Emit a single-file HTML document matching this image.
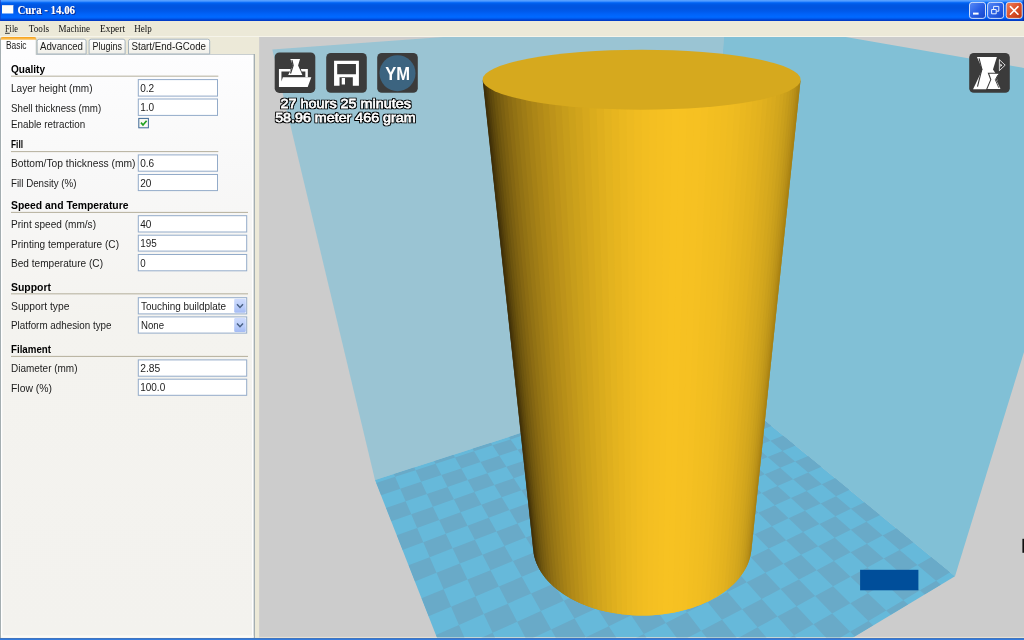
<!DOCTYPE html>
<html lang="en">
<head>
<meta charset="utf-8">
<title>Cura - 14.06</title>
<style>
html,body{margin:0;padding:0;}
body{width:1024px;height:640px;overflow:hidden;position:relative;background:#ece9d8;font-family:"Liberation Sans",sans-serif;}
.region{position:absolute;overflow:hidden;}
.layer{display:block;position:absolute;left:0;top:0;will-change:transform;}
#titlebar{left:0;top:0;width:1024px;height:21px;}
#menubar{left:0;top:21px;width:1024px;height:16px;background:#ece9d8;}
#sidebar{left:0;top:37px;width:259px;height:601px;background:#ece9d8;}
#viewport{left:259px;top:37px;width:765px;height:601px;background:#cccccc;}
#taskbar{left:0;top:637.7px;width:1024px;height:3px;background:linear-gradient(to bottom,#4f6f9f 0,#3478d8 30%,#2e80e4 100%);}
text{white-space:pre;}
</style>
</head>
<body>
<div id="titlebar" class="region">
<svg class="layer" width="1024" height="21" viewBox="0 0 1024 21">
<defs><linearGradient id="tb" x1="0" y1="0" x2="0" y2="1"><stop offset="0.000" stop-color="#5ea4ff"/><stop offset="0.057" stop-color="#4a98ff"/><stop offset="0.095" stop-color="#1a78ff"/><stop offset="0.143" stop-color="#0062f0"/><stop offset="0.238" stop-color="#0056e2"/><stop offset="0.381" stop-color="#0055e0"/><stop offset="0.524" stop-color="#0059ea"/><stop offset="0.667" stop-color="#0062f8"/><stop offset="0.786" stop-color="#0068ff"/><stop offset="0.857" stop-color="#0064fa"/><stop offset="0.905" stop-color="#0050e0"/><stop offset="0.952" stop-color="#0040d0"/><stop offset="1.000" stop-color="#0038c0"/></linearGradient><linearGradient id="bb" x1="0" y1="0" x2="1" y2="1"><stop offset="0" stop-color="#5a8cf6"/><stop offset="0.5" stop-color="#2a60e6"/><stop offset="1" stop-color="#1444c8"/></linearGradient><linearGradient id="rb" x1="0" y1="0" x2="1" y2="1"><stop offset="0" stop-color="#ee8462"/><stop offset="0.5" stop-color="#dc5028"/><stop offset="1" stop-color="#b83410"/></linearGradient><filter id="ts" x="-5%" y="-30%" width="110%" height="170%"><feOffset in="SourceAlpha" dx="0.8" dy="0.8" result="s"/><feFlood flood-color="#0a2a90"/><feComposite in2="s" operator="in" result="c"/><feMerge><feMergeNode in="c"/><feMergeNode in="SourceGraphic"/></feMerge></filter></defs>
<rect x="0" y="0" width="1024" height="21" fill="url(#tb)"/>
<rect x="0" y="0" width="1" height="21" fill="#1a3cc0" opacity="0.6"/>
<rect x="1022.7" y="0" width="1.3" height="21" fill="#0028a0" opacity="0.75"/>
<rect x="2" y="5.2" width="11.3" height="8.3" fill="#fdfdfb"/>
<rect x="2" y="5" width="11.3" height="0.8" fill="#d8dcf0"/>
<text x="17.5" y="13.8" font-size="11.8" textLength="57.5" lengthAdjust="spacingAndGlyphs" font-family='"Liberation Serif", serif' font-weight="bold" fill="#ffffff" filter="url(#ts)">Cura - 14.06</text>
<rect x="969.5" y="2.4" width="16" height="16" rx="2.6" fill="url(#bb)" stroke="#e4ecfc" stroke-width="0.9"/>
<rect x="987.6" y="2.4" width="16" height="16" rx="2.6" fill="url(#bb)" stroke="#e4ecfc" stroke-width="0.9"/>
<rect x="1006.2" y="2.4" width="16" height="16" rx="2.6" fill="url(#rb)" stroke="#e4ecfc" stroke-width="0.9"/>
<rect x="973" y="12.6" width="5.6" height="2" fill="#fff"/>
<path d="M991.6 9.5h4.6v4.3h-4.6z M993.6 9.3V6.4h5.2v4.8h-2.4" fill="none" stroke="#e8f0ff" stroke-width="1"/>
<path d="M1010.4 6.6l7.6 7.6M1018 6.6l-7.6 7.6" stroke="#fff" stroke-width="1.6" stroke-linecap="round"/>
</svg>
</div>
<div id="menubar" class="region">
<svg class="layer" width="1024" height="16" viewBox="0 21 1024 16">
<rect x="0" y="36" width="1024" height="1" fill="#f6f4ea"/>
<g font-family='"Liberation Serif", serif' fill="#111">
<text x="5" y="31.9" font-size="11" textLength="12.9" lengthAdjust="spacingAndGlyphs">File</text>
<text x="28.75" y="31.9" font-size="11" textLength="20.25" lengthAdjust="spacingAndGlyphs">Tools</text>
<text x="58.5" y="31.9" font-size="11" textLength="31.5" lengthAdjust="spacingAndGlyphs">Machine</text>
<text x="100" y="31.9" font-size="11" textLength="25" lengthAdjust="spacingAndGlyphs">Expert</text>
<text x="134.25" y="31.9" font-size="11" textLength="17.5" lengthAdjust="spacingAndGlyphs">Help</text>
</g>
<rect x="5" y="32.8" width="4.8" height="0.9" fill="#222"/>
</svg>
</div>
<div id="sidebar" class="region">
<svg class="layer" width="259" height="601" viewBox="0 37 259 601">
<defs><linearGradient id="pg" x1="0" y1="0" x2="0" y2="1"><stop offset="0" stop-color="#fdfdfe"/><stop offset="0.2" stop-color="#f8f8f8"/><stop offset="0.45" stop-color="#f4f3ef"/><stop offset="1" stop-color="#f3f2ee"/></linearGradient><linearGradient id="tg" x1="0" y1="0" x2="0" y2="1"><stop offset="0" stop-color="#ffffff"/><stop offset="1" stop-color="#f0efe8"/></linearGradient><linearGradient id="cb" x1="0" y1="0" x2="0" y2="1"><stop offset="0" stop-color="#cfdcfd"/><stop offset="0.6" stop-color="#b9ccfa"/><stop offset="1" stop-color="#a4bbf3"/></linearGradient></defs>
<rect x="0" y="54" width="255" height="584" fill="#a4aeb1"/>
<rect x="1" y="54.6" width="252.6" height="583" fill="#ffffff"/>
<rect x="2.3" y="55" width="249.7" height="580.7" fill="url(#pg)"/>
<rect x="1" y="635.7" width="252.6" height="2.2" fill="#fbfaf6"/>
<path d="M37.1 54V41.2q0 -2 2 -2H84.1q2 0 2 2V54z" fill="url(#tg)" stroke="#a4b3be" stroke-width="1"/>
<path d="M89.1 54V41.2q0 -2 2 -2H123.1q2 0 2 2V54z" fill="url(#tg)" stroke="#a4b3be" stroke-width="1"/>
<path d="M128.5 54V41.2q0 -2 2 -2H207.7q2 0 2 2V54z" fill="url(#tg)" stroke="#a4b3be" stroke-width="1"/>
<path d="M0 58V39.6q0 -2.4 2.4 -2.4H34.2q2.2 0 2.2 2.2V54.4H1.2V58z" fill="#a4aeb1"/>
<path d="M1 58V39.8q0 -1.8 1.8 -1.8H34q1.8 0 1.8 1.8V56H2.3V58z" fill="#fdfdfe"/>
<rect x="1" y="54" width="1.3" height="4" fill="#ffffff"/>
<path d="M0.6 39.4q0.2 -2.4 2.4 -2.4H34q2.2 0 2.4 2.4z" fill="#f8a622"/>
<rect x="0.9" y="38.5" width="35.2" height="0.9" fill="#fbc868"/>
<g font-family='"Liberation Sans", sans-serif' fill="#1a1a1a">
<text x="6" y="48.8" font-size="10" textLength="20.5" lengthAdjust="spacingAndGlyphs">Basic</text>
<text x="40" y="50" font-size="10" textLength="43" lengthAdjust="spacingAndGlyphs">Advanced</text>
<text x="92.5" y="50" font-size="10" textLength="29.5" lengthAdjust="spacingAndGlyphs">Plugins</text>
<text x="131.5" y="50" font-size="10" textLength="74.5" lengthAdjust="spacingAndGlyphs">Start/End-GCode</text>
</g>
<g font-family='"Liberation Sans", sans-serif'>
<text x="11" y="72.9" font-size="10.2" textLength="34" lengthAdjust="spacingAndGlyphs" font-weight="bold" fill="#000">Quality</text>
<rect x="11" y="75.7" width="207.3" height="0.9" fill="#ada792"/>
<text x="11" y="92.2" font-size="10.2" textLength="81.5" lengthAdjust="spacingAndGlyphs" fill="#1c1c1c">Layer height (mm)</text>
<rect x="138.3" y="79.6" width="79.2" height="16.5" fill="#ffffff" stroke="#93abc9" stroke-width="1"/>
<text x="140.2" y="91.7" font-size="10.2" textLength="14" lengthAdjust="spacingAndGlyphs" fill="#1c1c1c">0.2</text>
<text x="11" y="111.5" font-size="10.2" textLength="90.2" lengthAdjust="spacingAndGlyphs" fill="#1c1c1c">Shell thickness (mm)</text>
<rect x="138.3" y="99" width="79.2" height="16.4" fill="#ffffff" stroke="#93abc9" stroke-width="1"/>
<text x="140.2" y="111.1" font-size="10.2" textLength="14" lengthAdjust="spacingAndGlyphs" fill="#1c1c1c">1.0</text>
<text x="11" y="127.5" font-size="10.2" textLength="74.2" lengthAdjust="spacingAndGlyphs" fill="#1c1c1c">Enable retraction</text>
<rect x="138.8" y="118.4" width="9.6" height="9.4" fill="#f8f8f4" stroke="#3f6a97" stroke-width="1"/>
<path d="M141 122.6l2 2.4l3.6 -4.2" fill="none" stroke="#21a121" stroke-width="1.7"/>
<text x="11" y="148.4" font-size="10.2" textLength="12" lengthAdjust="spacingAndGlyphs" font-weight="bold" fill="#000">Fill</text>
<rect x="11" y="151.2" width="207.3" height="0.9" fill="#ada792"/>
<text x="11" y="167.4" font-size="10.2" textLength="124.5" lengthAdjust="spacingAndGlyphs" fill="#1c1c1c">Bottom/Top thickness (mm)</text>
<rect x="138.3" y="154.9" width="79.2" height="16.3" fill="#ffffff" stroke="#93abc9" stroke-width="1"/>
<text x="140.2" y="167" font-size="10.2" textLength="14" lengthAdjust="spacingAndGlyphs" fill="#1c1c1c">0.6</text>
<text x="11" y="187" font-size="10.2" textLength="65.5" lengthAdjust="spacingAndGlyphs" fill="#1c1c1c">Fill Density (%)</text>
<rect x="138.3" y="174.5" width="79.2" height="16.1" fill="#ffffff" stroke="#93abc9" stroke-width="1"/>
<text x="140.2" y="186.6" font-size="10.2" textLength="11.2" lengthAdjust="spacingAndGlyphs" fill="#1c1c1c">20</text>
<text x="11" y="209.1" font-size="10.2" textLength="117.5" lengthAdjust="spacingAndGlyphs" font-weight="bold" fill="#000">Speed and Temperature</text>
<rect x="11" y="211.9" width="237" height="0.9" fill="#ada792"/>
<text x="11" y="228.3" font-size="10.2" textLength="85" lengthAdjust="spacingAndGlyphs" fill="#1c1c1c">Print speed (mm/s)</text>
<rect x="138.3" y="215.7" width="108.4" height="16.3" fill="#ffffff" stroke="#93abc9" stroke-width="1"/>
<text x="140.2" y="227.8" font-size="10.2" textLength="11.2" lengthAdjust="spacingAndGlyphs" fill="#1c1c1c">40</text>
<text x="11" y="247.6" font-size="10.2" textLength="108" lengthAdjust="spacingAndGlyphs" fill="#1c1c1c">Printing temperature (C)</text>
<rect x="138.3" y="235.2" width="108.4" height="15.9" fill="#ffffff" stroke="#93abc9" stroke-width="1"/>
<text x="140.2" y="247.3" font-size="10.2" textLength="16.5" lengthAdjust="spacingAndGlyphs" fill="#1c1c1c">195</text>
<text x="11" y="267" font-size="10.2" textLength="92" lengthAdjust="spacingAndGlyphs" fill="#1c1c1c">Bed temperature (C)</text>
<rect x="138.3" y="254.5" width="108.4" height="16.3" fill="#ffffff" stroke="#93abc9" stroke-width="1"/>
<text x="140.2" y="266.6" font-size="10.2" textLength="5.4" lengthAdjust="spacingAndGlyphs" fill="#1c1c1c">0</text>
<text x="11" y="290.6" font-size="10.2" textLength="40" lengthAdjust="spacingAndGlyphs" font-weight="bold" fill="#000">Support</text>
<rect x="11" y="293.4" width="237" height="0.9" fill="#ada792"/>
<text x="11" y="310" font-size="10.2" textLength="58.5" lengthAdjust="spacingAndGlyphs" fill="#1c1c1c">Support type</text>
<rect x="138.3" y="297.7" width="108.4" height="16.2" fill="#ffffff" stroke="#93abc9" stroke-width="1"/>
<text x="141" y="309.6" font-size="10.2" textLength="85" lengthAdjust="spacingAndGlyphs" fill="#1c1c1c">Touching buildplate</text>
<rect x="234.2" y="298.8" width="11.6" height="14" rx="1.2" fill="url(#cb)"/>
<path d="M237 304.3L240 307.5L243 304.3" fill="none" stroke="#4a6184" stroke-width="1.5"/>
<text x="11" y="329.2" font-size="10.2" textLength="100.5" lengthAdjust="spacingAndGlyphs" fill="#1c1c1c">Platform adhesion type</text>
<rect x="138.3" y="316.9" width="108.4" height="16.2" fill="#ffffff" stroke="#93abc9" stroke-width="1"/>
<text x="141" y="328.8" font-size="10.2" textLength="23" lengthAdjust="spacingAndGlyphs" fill="#1c1c1c">None</text>
<rect x="234.2" y="318" width="11.6" height="14" rx="1.2" fill="url(#cb)"/>
<path d="M237 323.5L240 326.7L243 323.5" fill="none" stroke="#4a6184" stroke-width="1.5"/>
<text x="11" y="353.1" font-size="10.2" textLength="40" lengthAdjust="spacingAndGlyphs" font-weight="bold" fill="#000">Filament</text>
<rect x="11" y="355.9" width="237" height="0.9" fill="#ada792"/>
<text x="11" y="372.3" font-size="10.2" textLength="66.5" lengthAdjust="spacingAndGlyphs" fill="#1c1c1c">Diameter (mm)</text>
<rect x="138.3" y="359.9" width="108.4" height="16.3" fill="#ffffff" stroke="#93abc9" stroke-width="1"/>
<text x="140.2" y="372" font-size="10.2" textLength="20" lengthAdjust="spacingAndGlyphs" fill="#1c1c1c">2.85</text>
<text x="11" y="391.5" font-size="10.2" textLength="41" lengthAdjust="spacingAndGlyphs" fill="#1c1c1c">Flow (%)</text>
<rect x="138.3" y="379.2" width="108.4" height="16.1" fill="#ffffff" stroke="#93abc9" stroke-width="1"/>
<text x="140.2" y="391.3" font-size="10.2" textLength="25" lengthAdjust="spacingAndGlyphs" fill="#1c1c1c">100.0</text>
</g>
</svg>
</div>
<div id="viewport" class="region">
<svg class="layer" width="765" height="601" viewBox="259 37 765 601">
<defs><clipPath id="vp"><rect x="259.3" y="37" width="764.7" height="600.3"/></clipPath><clipPath id="floor"><polygon id="floorpoly" points="375,480 707,373 955,576.3 516.5,840"/></clipPath></defs>
<rect x="259" y="37" width="0.5" height="601" fill="#ece9d8"/>
<rect x="259.3" y="37" width="764.7" height="600.3" fill="#cccccc"/>
<rect x="259.3" y="636.9" width="764.7" height="1.1" fill="#e6e0d2"/>
<g clip-path="url(#vp)">
<polygon points="375,480 272.3,49.6 457,36 723.7,36 707,373" fill="#9ac4d3"/>
<polygon points="707,373 723.7,36 840,36 1030,69 1040,300 955,576.3" fill="#81c0d6"/>
<polygon points="375,480 707,373 955,576.3 516.5,840" fill="#66b9da"/>
<g clip-path="url(#floor)" fill="#69aac8">
<path d="M376.17 482.98L395.09 476.84L400.24 488.79L380.98 495.2zM385.99 507.97L405.62 501.26L411.24 514.29L391.24 521.32zM396.73 535.29L417.12 527.92L423.28 542.18L402.49 549.93zM408.52 565.28L429.73 557.14L436.5 572.83L414.86 581.4zM421.52 598.34L443.61 589.32L451.09 606.66L428.53 616.18zM435.92 634.98L458.97 624.93L467.28 644.19L443.72 654.83zM393.83 473.93L414.24 467.35L415.59 470.19L395.09 476.84zM400.24 488.79L421.11 481.84L426.87 493.99L405.62 501.26zM411.24 514.29L432.88 506.67L439.17 519.94L417.12 527.92zM423.28 542.18L445.74 533.82L452.63 548.35L429.73 557.14zM436.5 572.83L459.85 563.59L467.44 579.59L443.61 589.32zM451.09 606.66L475.41 596.41L483.79 614.1L458.97 624.93zM467.28 644.19L492.63 632.75L501.96 652.43L476.06 664.54zM415.59 470.19L435.56 463.71L441.43 475.07L421.11 481.84zM426.87 493.99L447.54 486.91L453.92 499.27L432.88 506.67zM439.17 519.94L460.59 512.18L467.56 525.69L445.74 533.82zM452.63 548.35L474.86 539.82L482.51 554.63L459.85 563.59zM467.44 579.59L490.53 570.16L498.95 586.47L475.41 596.41zM483.79 614.1L507.81 603.63L517.14 621.69L492.63 632.75zM501.96 652.43L526.97 640.73L537.35 660.84L511.81 673.23zM434.13 460.94L453.52 454.69L455.03 457.39L435.56 463.71zM441.43 475.07L461.22 468.48L467.67 480.02L447.54 486.91zM453.92 499.27L474.4 492.07L481.43 504.64L460.59 512.18zM467.56 525.69L488.77 517.79L496.45 531.53L474.86 539.82zM482.51 554.63L504.49 545.93L512.92 561.01L490.53 570.16zM498.95 586.47L521.77 576.85L531.06 593.49L507.81 603.63zM517.14 621.69L540.84 610.99L551.14 629.43L526.97 640.73zM455.03 457.39L474.01 451.24L480.51 462.05L461.22 468.48zM467.67 480.02L487.27 473.32L494.33 485.06L474.4 492.07zM481.43 504.64L501.69 497.31L509.38 510.11L488.77 517.79zM496.45 531.53L517.42 523.48L525.83 537.48L504.49 545.93zM512.92 561.01L534.64 552.14L543.89 567.52L521.77 576.85zM531.06 593.49L553.59 583.66L563.79 600.63L540.84 610.99zM551.14 629.43L574.52 618.5L585.83 637.32L562.01 648.88zM472.42 448.6L490.86 442.66L492.52 445.23L474.01 451.24zM480.51 462.05L499.31 455.79L506.37 466.78L487.27 473.32zM494.33 485.06L513.74 478.23L521.42 490.17L501.69 497.31zM509.38 510.11L529.43 502.64L537.81 515.66L517.42 523.48zM525.83 537.48L546.56 529.27L555.73 543.53L534.64 552.14zM543.89 567.52L565.34 558.47L575.42 574.14L553.59 583.66zM563.79 600.63L586 590.61L597.14 607.92L574.52 618.5zM585.83 637.32L608.86 626.15L621.23 645.38L597.77 657.19zM492.52 445.23L510.57 439.38L517.64 449.68L499.31 455.79zM506.37 466.78L524.99 460.41L532.64 471.58L513.74 478.23zM521.42 490.17L540.62 483.22L548.94 495.37L529.43 502.64zM537.81 515.66L557.63 508.05L566.71 521.3L546.56 529.27zM555.73 543.53L576.21 535.17L586.16 549.69L565.34 558.47zM575.42 574.14L596.59 564.91L607.53 580.89L586 590.61zM597.14 607.92L619.04 597.68L631.14 615.35L608.86 626.15zM621.23 645.38L643.89 633.96L657.35 653.6L634.28 665.68zM508.85 436.86L526.41 431.2L528.19 433.66L510.57 439.38zM517.64 449.68L535.52 443.73L543.13 454.2L524.99 460.41zM532.64 471.58L551.06 465.1L559.31 476.46L540.62 483.22zM548.94 495.37L567.92 488.3L576.91 500.65L557.63 508.05zM566.71 521.3L586.29 513.55L596.1 527.04L576.21 535.17zM586.16 549.69L606.36 541.16L617.12 555.96L596.59 564.91zM607.53 580.89L628.4 571.47L640.25 587.76L619.04 597.68zM631.14 615.35L652.7 604.89L665.81 622.92L643.89 633.96zM528.19 433.66L545.39 428.08L552.96 437.92L535.52 443.73zM543.13 454.2L560.83 448.15L569.01 458.79L551.06 465.1zM559.31 476.46L577.53 469.87L586.41 481.41L567.92 488.3zM576.91 500.65L595.66 493.45L605.33 506.02L586.29 513.55zM596.1 527.04L615.43 519.15L625.99 532.88L606.36 541.16zM617.12 555.96L637.05 547.26L648.64 562.33L628.4 571.47zM640.25 587.76L660.8 578.15L673.58 594.76L652.7 604.89zM665.81 622.92L687.02 612.24L701.17 630.64L679.63 641.92zM543.55 425.68L560.29 420.28L562.19 422.63L545.39 428.08zM552.96 437.92L569.99 432.25L578.09 442.24L560.83 448.15zM569.01 458.79L586.51 452.63L595.28 463.44L577.53 469.87zM586.41 481.41L604.41 474.7L613.93 486.44L595.66 493.45zM605.33 506.02L623.86 498.69L634.22 511.47L615.43 519.15zM625.99 532.88L645.06 524.84L656.4 538.82L637.05 547.26zM648.64 562.33L668.28 553.47L680.73 568.83L660.8 578.15zM673.58 594.76L693.8 584.95L707.54 601.9L687.02 612.24zM701.17 630.64L722 619.73L737.23 638.52L716.1 650.05zM562.19 422.63L578.59 417.31L586.61 426.71L569.99 432.25zM578.09 442.24L594.93 436.48L603.58 446.62L586.51 452.63zM595.28 463.44L612.58 457.18L621.95 468.17L604.41 474.7zM613.93 486.44L631.71 479.62L641.88 491.55L623.86 498.69zM634.22 511.47L652.5 504.01L663.6 517.02L645.06 524.84zM656.4 538.82L675.2 530.63L687.34 544.87L668.28 553.47zM680.73 568.83L700.06 559.79L713.41 575.44L693.8 584.95zM707.54 601.9L727.42 591.88L742.16 609.17L722 619.73zM737.23 638.52L757.67 627.37L774.03 646.55L753.31 658.35zM576.63 415.02L592.61 409.87L594.62 412.11L578.59 417.31zM586.61 426.71L602.84 421.31L611.37 430.85L594.93 436.48zM603.58 446.62L620.24 440.77L629.45 451.07L612.58 457.18zM621.95 468.17L639.04 461.8L649.03 472.97L631.71 479.62zM641.88 491.55L659.44 484.6L670.29 496.74L652.5 504.01zM663.6 517.02L681.62 509.42L693.46 522.66L675.2 530.63zM687.34 544.87L705.85 536.51L718.82 551.02L700.06 559.79zM713.41 575.44L732.42 566.22L746.68 582.18L727.42 591.88zM742.16 609.17L761.67 598.94L777.44 616.58L757.67 627.37zM774.03 646.55L794.06 635.16L811.58 654.76L791.3 666.81zM594.62 412.11L610.28 407.03L618.69 416.03L602.84 421.31zM611.37 430.85L627.42 425.36L636.49 435.05L620.24 440.77zM629.45 451.07L645.91 445.12L655.71 455.59L639.04 461.8zM649.03 472.97L665.91 466.49L676.53 477.84L659.44 484.6zM670.29 496.74L687.6 489.67L699.16 502.02L681.62 509.42zM693.46 522.66L711.22 514.92L723.84 528.39L705.85 536.51zM718.82 551.02L737.03 542.5L750.86 557.28L732.42 566.22zM746.68 582.18L765.36 572.77L780.58 589.04L761.67 598.94zM777.44 616.58L796.58 606.14L813.42 624.14L794.06 635.16zM608.22 404.84L623.48 399.92L625.59 402.07L610.28 407.03zM618.69 416.03L634.18 410.87L643.1 419.99L627.42 425.36zM636.49 435.05L652.36 429.47L661.97 439.31L645.91 445.12zM655.71 455.59L671.97 449.53L682.36 460.17L665.91 466.49zM676.53 477.84L693.19 471.25L704.46 482.79L687.6 489.67zM699.16 502.02L716.22 494.82L728.49 507.38L711.22 514.92zM723.84 528.39L741.32 520.51L754.72 534.23L737.03 542.5zM750.86 557.28L768.76 548.59L783.47 563.65L765.36 572.77zM780.58 589.04L798.9 579.44L815.11 596.03L796.58 606.14zM813.42 624.14L832.16 613.47L850.11 631.84L831.17 643.11zM625.59 402.07L640.55 397.21L649.32 405.82L634.18 410.87zM643.1 419.99L658.42 414.75L667.85 424.02L652.36 429.47zM661.97 439.31L677.65 433.63L687.82 443.63L671.97 449.53zM682.36 460.17L698.41 454.01L709.42 464.82L693.19 471.25zM704.46 482.79L720.88 476.08L732.83 487.82L716.22 494.82zM728.49 507.38L745.3 500.05L758.31 512.83L741.32 520.51zM754.72 534.23L771.91 526.19L786.14 540.16L768.76 548.59zM783.47 563.65L801.05 554.79L816.67 570.13L798.9 579.44zM815.11 596.03L833.07 586.23L850.3 603.15L832.16 613.47zM850.11 631.84L868.43 620.95L873.11 625.55L854.75 636.59zM638.41 395.11L653.01 390.4L655.19 392.46L640.55 397.21zM649.32 405.82L664.12 400.89L673.38 409.63L658.42 414.75zM667.85 424.02L682.99 418.69L692.95 428.1L677.65 433.63zM687.82 443.63L703.3 437.86L714.05 448.01L698.41 454.01zM709.42 464.82L725.24 458.56L736.88 469.55L720.88 476.08zM732.83 487.82L749.01 480.99L761.65 492.92L745.3 500.05zM758.31 512.83L774.84 505.37L788.62 518.37L771.91 526.19zM786.14 540.16L803.03 531.97L818.11 546.2L801.05 554.79zM816.67 570.13L833.91 561.1L850.47 576.73L833.07 586.23zM850.3 603.15L867.87 593.15L886.16 610.41L868.43 620.95zM655.19 392.46L669.51 387.82L678.6 396.07L664.12 400.89zM673.38 409.63L688.01 404.63L697.77 413.49L682.99 418.69zM692.95 428.1L707.9 422.69L718.41 432.23L703.3 437.86zM714.05 448.01L729.32 442.15L740.67 452.46L725.24 458.56zM736.88 469.55L752.48 463.18L764.77 474.34L749.01 480.99zM761.65 492.92L777.57 485.98L790.93 498.11L774.84 505.37zM788.62 518.37L804.88 510.78L819.44 524.01L803.03 531.97zM818.11 546.2L834.68 537.85L850.63 552.34L833.91 561.1zM850.47 576.73L867.35 567.52L884.9 583.46L867.87 593.15zM886.16 610.41L903.33 600.2L908.08 604.52L890.88 614.86zM667.29 385.8L681.26 381.3L683.52 383.27L669.51 387.82zM678.6 396.07L692.75 391.36L702.31 399.73L688.01 404.63zM697.77 413.49L712.22 408.41L722.5 417.4L707.9 422.69zM718.41 432.23L733.15 426.74L744.22 436.43L729.32 442.15zM740.67 452.46L755.72 446.5L767.68 456.97L752.48 463.18zM764.77 474.34L780.12 467.87L793.08 479.21L777.57 485.98zM790.93 498.11L806.59 491.04L820.69 503.38L804.88 510.78zM819.44 524.01L835.4 516.27L850.78 529.74L834.68 537.85zM850.63 552.34L866.88 543.83L883.73 558.59L867.35 567.52zM884.9 583.46L901.41 574.06L919.96 590.31L903.33 600.2zM683.52 383.27L697.23 378.83L706.6 386.75L692.75 391.36zM702.31 399.73L716.3 394.95L726.35 403.44L712.22 408.41zM722.5 417.4L736.76 412.24L747.56 421.37L733.15 426.74zM744.22 436.43L758.77 430.85L770.41 440.69L755.72 446.5zM767.68 456.97L782.51 450.91L795.1 461.55L780.12 467.87zM793.08 479.21L808.19 472.62L821.84 484.16L806.59 491.04zM820.69 503.38L836.07 496.19L850.92 508.74L835.4 516.27zM850.78 529.74L866.44 521.85L882.66 535.56L866.88 543.83zM883.73 558.59L899.63 549.91L917.42 564.95L901.41 574.06zM919.96 590.31L936.08 580.72L940.89 584.79L924.74 594.5zM694.94 376.89L707 373L709.32 374.9L697.23 378.83zM706.6 386.75L718.81 382.68L728.63 390.73L716.3 394.95zM726.35 403.44L738.79 399.06L749.32 407.69L736.76 412.24zM747.56 421.37L760.24 416.65L771.57 425.93L758.77 430.85zM770.41 440.69L783.33 435.57L795.55 445.59L782.51 450.91zM795.1 461.55L808.25 456L821.47 466.83L808.19 472.62zM821.84 484.16L835.23 478.12L849.57 489.87L836.07 496.19zM850.92 508.74L864.53 502.14L880.15 514.94L866.44 521.85zM882.66 535.56L896.47 528.32L913.55 542.32L899.63 549.91zM917.42 564.95L931.43 556.98L950.17 572.34L936.08 580.72z"/>
</g>
<rect x="860.1" y="569.8" width="58.3" height="20.5" fill="#004e9a"/>
<g>
<polygon points="482.63,80 482.98,80.73 483.69,81.45 534.44,557 533.73,553.75 533.26,550.49" fill="#3a2b07"/>
<polygon points="482.98,80.73 483.69,81.45 484.78,82.17 535.39,560.22 534.44,557 533.73,553.75" fill="#3c2d07"/>
<polygon points="483.69,81.45 484.78,82.17 486.23,82.89 536.58,563.41 535.39,560.22 534.44,557" fill="#413008"/>
<polygon points="484.78,82.17 486.23,82.89 488.05,83.59 538,566.56 536.58,563.41 535.39,560.22" fill="#473609"/>
<polygon points="486.23,82.89 488.05,83.59 490.23,84.29 539.64,569.67 538,566.56 536.58,563.41" fill="#503d0a"/>
<polygon points="488.05,83.59 490.23,84.29 492.77,84.98 541.52,572.72 539.64,569.67 538,566.56" fill="#5a450c"/>
<polygon points="490.23,84.29 492.77,84.98 495.65,85.65 543.62,575.71 541.52,572.72 539.64,569.67" fill="#624c0d"/>
<polygon points="492.77,84.98 495.65,85.65 498.88,86.31 545.93,578.64 543.62,575.71 541.52,572.72" fill="#6c540e"/>
<polygon points="495.65,85.65 498.88,86.31 502.44,86.96 548.46,581.49 545.93,578.64 543.62,575.71" fill="#745a10"/>
<polygon points="498.88,86.31 502.44,86.96 506.33,87.58 551.2,584.26 548.46,581.49 545.93,578.64" fill="#7c6011"/>
<polygon points="502.44,86.96 506.33,87.58 510.54,88.19 554.13,586.95 551.2,584.26 548.46,581.49" fill="#846612"/>
<polygon points="506.33,87.58 510.54,88.19 515.05,88.78 557.26,589.55 554.13,586.95 551.2,584.26" fill="#8c6c13"/>
<polygon points="510.54,88.19 515.05,88.78 519.86,89.35 560.58,592.05 557.26,589.55 554.13,586.95" fill="#927214"/>
<polygon points="515.05,88.78 519.86,89.35 524.96,89.89 564.08,594.45 560.58,592.05 557.26,589.55" fill="#997715"/>
<polygon points="519.86,89.35 524.96,89.89 530.33,90.42 567.75,596.74 564.08,594.45 560.58,592.05" fill="#9f7c16"/>
<polygon points="524.96,89.89 530.33,90.42 535.97,90.91 571.58,598.92 567.75,596.74 564.08,594.45" fill="#a68116"/>
<polygon points="530.33,90.42 535.97,90.91 541.85,91.38 575.58,600.98 571.58,598.92 567.75,596.74" fill="#ac8617"/>
<polygon points="535.97,90.91 541.85,91.38 547.96,91.82 579.71,602.92 575.58,600.98 571.58,598.92" fill="#b28a18"/>
<polygon points="541.85,91.38 547.96,91.82 554.3,92.24 583.99,604.74 579.71,602.92 575.58,600.98" fill="#b78f18"/>
<polygon points="547.96,91.82 554.3,92.24 560.84,92.62 588.4,606.42 583.99,604.74 579.71,602.92" fill="#bd931a"/>
<polygon points="554.3,92.24 560.84,92.62 567.57,92.97 592.92,607.97 588.4,606.42 583.99,604.74" fill="#c2981a"/>
<polygon points="560.84,92.62 567.57,92.97 574.47,93.3 597.55,609.38 592.92,607.97 588.4,606.42" fill="#c79d1b"/>
<polygon points="567.57,92.97 574.47,93.3 581.53,93.59 602.28,610.65 597.55,609.38 592.92,607.97" fill="#cca11b"/>
<polygon points="574.47,93.3 581.53,93.59 588.73,93.85 607.1,611.78 602.28,610.65 597.55,609.38" fill="#d1a41c"/>
<polygon points="581.53,93.59 588.73,93.85 596.06,94.07 612,612.76 607.1,611.78 602.28,610.65" fill="#d6a81d"/>
<polygon points="588.73,93.85 596.06,94.07 603.49,94.26 616.97,613.6 612,612.76 607.1,611.78" fill="#daac1d"/>
<polygon points="596.06,94.07 603.49,94.26 611.02,94.42 621.99,614.28 616.97,613.6 612,612.76" fill="#dfaf1e"/>
<polygon points="603.49,94.26 611.02,94.42 618.61,94.54 627.05,614.82 621.99,614.28 616.97,613.6" fill="#e3b31f"/>
<polygon points="611.02,94.42 618.61,94.54 626.26,94.63 632.15,615.2 627.05,614.82 621.99,614.28" fill="#e7b51f"/>
<polygon points="618.61,94.54 626.26,94.63 633.94,94.68 637.27,615.43 632.15,615.2 627.05,614.82" fill="#eab820"/>
<polygon points="626.26,94.63 633.94,94.68 641.64,94.7 642.4,615.5 637.27,615.43 632.15,615.2" fill="#edba21"/>
<polygon points="633.94,94.68 641.64,94.7 649.35,94.68 647.54,615.42 642.4,615.5 637.27,615.43" fill="#f0bc21"/>
<polygon points="641.64,94.7 649.35,94.68 657.03,94.63 652.66,615.19 647.54,615.42 642.4,615.5" fill="#f2be21"/>
<polygon points="649.35,94.68 657.03,94.63 664.68,94.54 657.75,614.8 652.66,615.19 647.54,615.42" fill="#f4bf22"/>
<polygon points="657.03,94.63 664.68,94.54 672.27,94.42 662.82,614.26 657.75,614.8 652.66,615.19" fill="#f5c022"/>
<polygon points="664.68,94.54 672.27,94.42 679.79,94.26 667.84,613.57 662.82,614.26 657.75,614.8" fill="#f6c122"/>
<polygon points="672.27,94.42 679.79,94.26 687.23,94.07 672.8,612.73 667.84,613.57 662.82,614.26" fill="#f7c222"/>
<polygon points="679.79,94.26 687.23,94.07 694.55,93.84 677.69,611.74 672.8,612.73 667.84,613.57" fill="#f7c222"/>
<polygon points="687.23,94.07 694.55,93.84 701.75,93.59 682.51,610.61 677.69,611.74 672.8,612.73" fill="#f6c122"/>
<polygon points="694.55,93.84 701.75,93.59 708.81,93.29 687.24,609.33 682.51,610.61 677.69,611.74" fill="#f6c122"/>
<polygon points="701.75,93.59 708.81,93.29 715.71,92.97 691.87,607.91 687.24,609.33 682.51,610.61" fill="#f5c022"/>
<polygon points="708.81,93.29 715.71,92.97 722.44,92.62 696.38,606.36 691.87,607.91 687.24,609.33" fill="#f3bf21"/>
<polygon points="715.71,92.97 722.44,92.62 728.98,92.23 700.78,604.67 696.38,606.36 691.87,607.91" fill="#f2be21"/>
<polygon points="722.44,92.62 728.98,92.23 735.31,91.82 705.06,602.85 700.78,604.67 696.38,606.36" fill="#f1bd21"/>
<polygon points="728.98,92.23 735.31,91.82 741.42,91.38 709.19,600.9 705.06,602.85 700.78,604.67" fill="#efbc21"/>
<polygon points="735.31,91.82 741.42,91.38 747.3,90.91 713.17,598.84 709.19,600.9 705.06,602.85" fill="#edba21"/>
<polygon points="741.42,91.38 747.3,90.91 752.93,90.41 717,596.65 713.17,598.84 709.19,600.9" fill="#eab820"/>
<polygon points="747.3,90.91 752.93,90.41 758.3,89.89 720.67,594.36 717,596.65 713.17,598.84" fill="#e8b620"/>
<polygon points="752.93,90.41 758.3,89.89 763.39,89.34 724.16,591.95 720.67,594.36 717,596.65" fill="#e5b41f"/>
<polygon points="758.3,89.89 763.39,89.34 768.2,88.77 727.47,589.45 724.16,591.95 720.67,594.36" fill="#e3b21f"/>
<polygon points="763.39,89.34 768.2,88.77 772.71,88.19 730.59,586.85 727.47,589.45 724.16,591.95" fill="#dfaf1f"/>
<polygon points="768.2,88.77 772.71,88.19 776.92,87.58 733.52,584.15 730.59,586.85 727.47,589.45" fill="#dbac1e"/>
<polygon points="772.71,88.19 776.92,87.58 780.8,86.95 736.25,581.38 733.52,584.15 730.59,586.85" fill="#d8aa1e"/>
<polygon points="776.92,87.58 780.8,86.95 784.36,86.3 738.76,578.52 736.25,581.38 733.52,584.15" fill="#d4a71d"/>
<polygon points="780.8,86.95 784.36,86.3 787.58,85.64 741.07,575.59 738.76,578.52 736.25,581.38" fill="#d0a41d"/>
<polygon points="784.36,86.3 787.58,85.64 790.46,84.97 743.16,572.6 741.07,575.59 738.76,578.52" fill="#cba01c"/>
<polygon points="787.58,85.64 790.46,84.97 793,84.28 745.03,569.54 743.16,572.6 741.07,575.59" fill="#c69c1b"/>
<polygon points="790.46,84.97 793,84.28 795.17,83.59 746.67,566.44 745.03,569.54 743.16,572.6" fill="#c0971a"/>
<polygon points="793,84.28 795.17,83.59 796.99,82.88 748.08,563.28 746.67,566.44 745.03,569.54" fill="#bb9219"/>
<polygon points="795.17,83.59 796.99,82.88 798.44,82.17 749.25,560.09 748.08,563.28 746.67,566.44" fill="#b58d17"/>
<polygon points="796.99,82.88 798.44,82.17 799.52,81.45 750.19,556.87 749.25,560.09 748.08,563.28" fill="#af8714"/>
<polygon points="798.44,82.17 799.52,81.45 800.23,80.72 750.89,553.62 750.19,556.87 749.25,560.09" fill="#aa8313"/>
<polygon points="799.52,81.45 800.23,80.72 800.57,80 751.36,550.36 750.89,553.62 750.19,556.87" fill="#a78012"/>
<polygon points="800.23,80.72 800.57,80 751.36,550.36 750.89,553.62" fill="#a57e11"/>
</g>
<ellipse cx="641.6" cy="79.7" rx="159.0" ry="30.0" fill="#d6a91e"/>
<rect x="1022.4" y="538.8" width="1.6" height="14" fill="#111"/>
<rect x="274.7" y="52.5" width="40.6" height="40.4" rx="4.6" fill="#3b3b3b"/>
<rect x="326.2" y="53.0" width="40.6" height="39.8" rx="4.6" fill="#3b3b3b"/>
<rect x="377.2" y="53.0" width="40.6" height="39.8" rx="4.6" fill="#3b3b3b"/>
<rect x="969.2" y="53.0" width="40.6" height="39.8" rx="4.6" fill="#3b3b3b"/>
<g fill="#ffffff">
<polygon points="278.94,69.05 290.66,69.05 289.88,71.39 281.44,71.39 281.44,81.55 282.84,77.25 311.36,77.25 307.69,87.02 278.94,87.02"/>
<polygon points="300.81,69.05 307.84,69.05 307.84,77.25 305.34,77.25 305.34,71.39 301.59,71.39"/>
<polygon points="290.27,58.89 300.03,58.89 298.08,65.53 302.38,75.06 288.16,75.06 293,65.53"/>
</g>
<polyline points="291.91,60.22 293.16,65.53 290.5,73.5" fill="none" stroke="#3b3b3b" stroke-width="1.2"/>
<path fill="#ffffff" fill-rule="evenodd" d="M334.06,60.84L358.91,60.84 358.91,85.84 352.81,85.84 352.81,77.25 339.53,77.25 339.53,85.84 334.06,85.84z M337.19,63.97L355.94,63.97 355.94,74.28 337.19,74.28z"/>
<polygon fill="#ffffff" points="341.72,78.03 345,78.03 345,84.44 341.72,84.44"/>
<circle cx="397.5" cy="73.2" r="18" fill="#3c6480"/>
<text x="385.2" y="80" font-family='"Liberation Sans", sans-serif' font-weight="bold" font-size="18" textLength="24.8" lengthAdjust="spacingAndGlyphs" fill="#ffffff">YM</text>
<polygon fill="#ffffff" points="976.95,56.94 996.88,56.94 992.97,69.44 995.31,72.95 1000,89.36 973.05,89.36 982.42,69.44"/>
<polyline points="979.06,58.34 981.88,69.2 977.5,86.62" fill="none" stroke="#3b3b3b" stroke-width="1.1"/>
<polygon fill="#ffffff" stroke="#3b3b3b" stroke-width="1.1" points="988.44,73.19 999.38,73.19 996.41,79.59 1001.41,89.59 986.56,89.59 990.78,79.59"/>
<polyline points="997.81,75.06 995.31,79.75 998.83,87.8" fill="none" stroke="#3b3b3b" stroke-width="0.9"/>
<polygon points="999.38,59.67 1005.16,65.14 999.38,70.61" fill="none" stroke="#ffffff" stroke-width="0.8"/>
<polygon points="1000.39,63.58 1002.19,65.14 1000.39,66.94" fill="#ffffff"/>
<filter id="ol" x="-5%" y="-30%" width="110%" height="160%"><feMorphology in="SourceAlpha" operator="dilate" radius="0.85" result="d"/><feGaussianBlur in="d" stdDeviation="0.25" result="b"/><feFlood flood-color="#000"/><feComposite in2="b" operator="in" result="c"/><feMerge><feMergeNode in="c"/><feMergeNode in="SourceGraphic"/></feMerge></filter>
<g font-family='"Liberation Sans", sans-serif' font-size="13.6" fill="#ffffff" stroke="#ffffff" stroke-width="0.35" filter="url(#ol)">
<text x="280.6" y="108.1" textLength="130.4" lengthAdjust="spacingAndGlyphs">27 hours 25 minutes</text>
<text x="275.2" y="122.2" textLength="140.4" lengthAdjust="spacingAndGlyphs">58.96 meter 466 gram</text>
</g>
</g>
</svg>
</div>
<div id="taskbar" class="region"></div>
</body>
</html>
